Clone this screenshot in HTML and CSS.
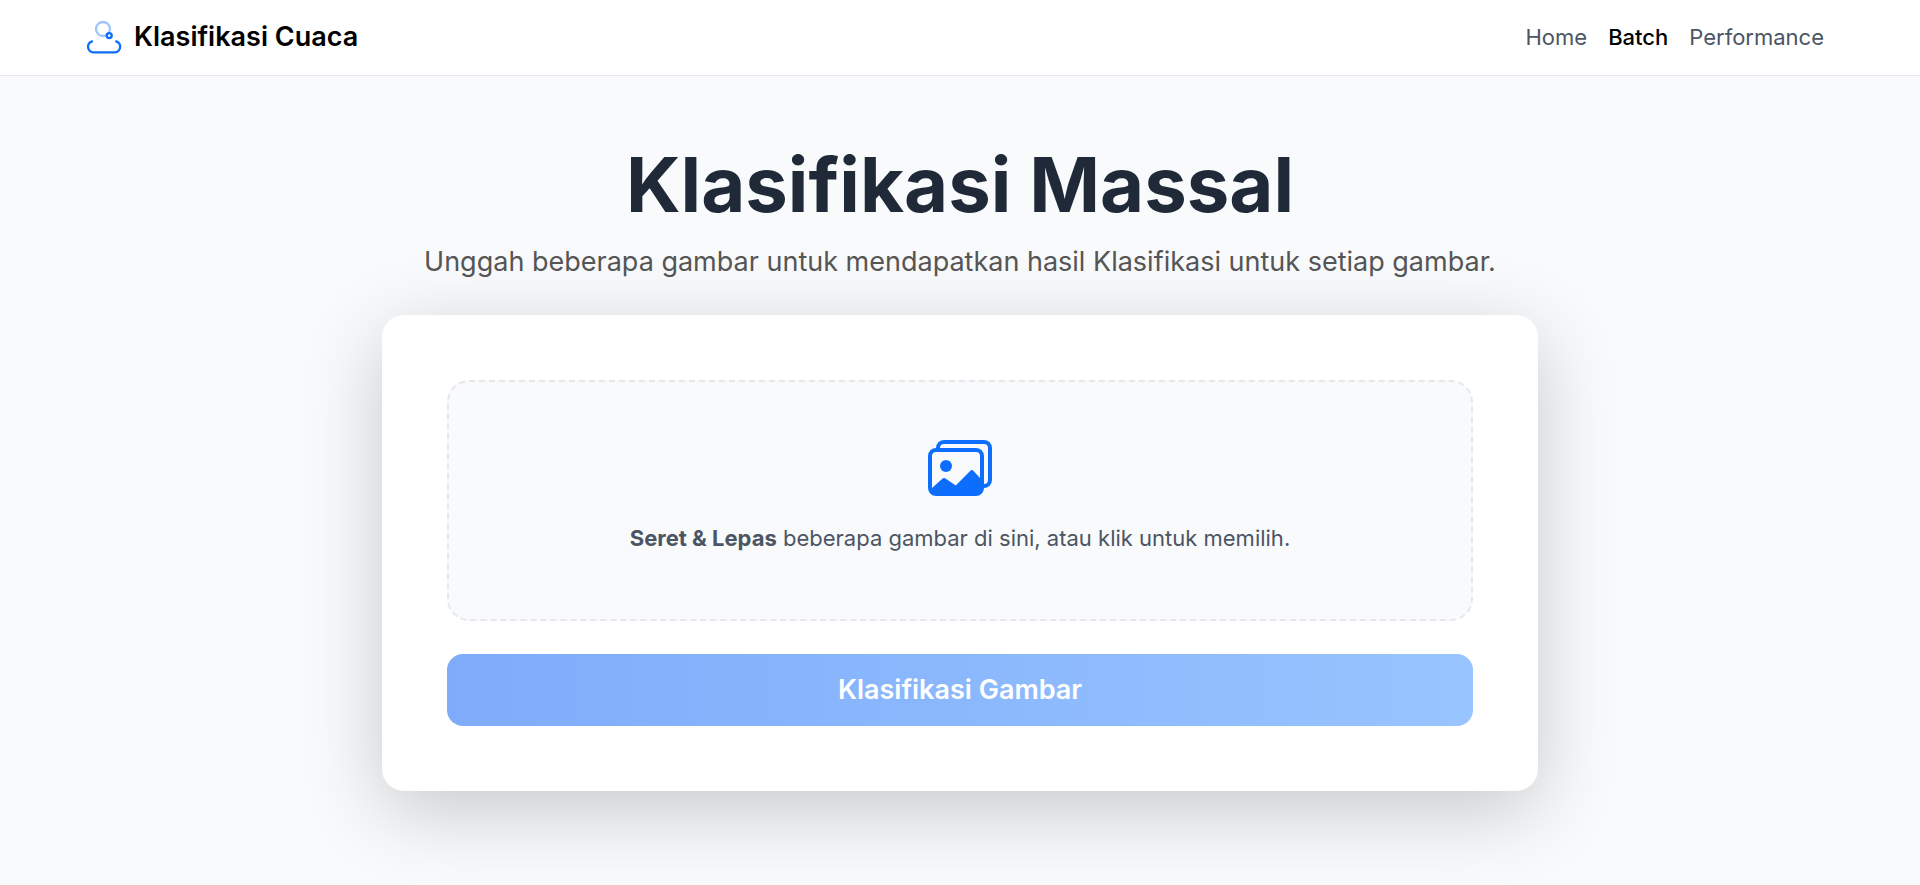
FILE: index.html
```html
<!DOCTYPE html>
<html lang="id">
<head>
<meta charset="utf-8">
<meta name="viewport" content="width=device-width, initial-scale=1">
<title>Klasifikasi Massal</title>
<link rel="stylesheet" href="styles.css">
</head>
<body>
<header class="navbar">
  <a class="brand" href="#">
    <svg class="brand-icon" viewBox="0 1 36 36" fill="none" stroke-width="2.3" stroke-linecap="round" aria-hidden="true">
      <circle cx="17" cy="11" r="7" stroke="#9ec5fe"/>
      <circle cx="23.2" cy="17.6" r="2.5" stroke="#0d6efd" stroke-width="2.4"/>
      <path d="M6 23.4a5.8 5.8 0 0 0-4 5.4a5.6 5.6 0 0 0 5.6 5.6h21a5.6 5.6 0 0 0 5.6-5.6a5.8 5.8 0 0 0-4-5.4" stroke="#0d6efd"/>
    </svg>
    <span>Klasifikasi Cuaca</span>
  </a>
  <nav class="nav-links">
    <a href="#">Home</a>
    <a class="active" href="#" aria-current="page">Batch</a>
    <a href="#">Performance</a>
  </nav>
</header>
<main class="page">
  <h1 class="title">Klasifikasi Massal</h1>
  <p class="subtitle">Unggah beberapa gambar untuk mendapatkan hasil Klasifikasi untuk setiap gambar.</p>
  <form class="card">
    <label class="dropzone">
      <input class="file-input" type="file" accept="image/*" multiple>
      <svg class="drop-icon" viewBox="0 0 16 16" fill="currentColor" aria-hidden="true">
        <path d="M4.502 9a1.5 1.5 0 1 0 0-3 1.5 1.5 0 0 0 0 3z"/>
        <path d="M14.002 13a2 2 0 0 1-2 2h-10a2 2 0 0 1-2-2V5A2 2 0 0 1 2 3a2 2 0 0 1 2-2h10a2 2 0 0 1 2 2v8a2 2 0 0 1-1.998 2zM14 2H4a1 1 0 0 0-1 1h9.002a2 2 0 0 1 2 2v7A1 1 0 0 0 15 11V3a1 1 0 0 0-1-1zM2.002 4a1 1 0 0 0-1 1v8l2.646-2.354a.5.5 0 0 1 .63-.062l2.66 1.773 3.71-3.71a.5.5 0 0 1 .577-.094l1.777 1.947V5a1 1 0 0 0-1-1h-10z"/>
      </svg>
      <span class="drop-text"><strong>Seret &amp; Lepas</strong> beberapa gambar di sini, atau klik untuk memilih.</span>
    </label>
    <button class="submit" type="submit" disabled>Klasifikasi Gambar</button>
  </form>
</main>
</body>
</html>
```
FILE: styles.css
```css
* {
  box-sizing: border-box;
}

body {
  margin: 0;
  min-height: 100vh;
  background: #f9fafc;
  color: #4b5563;
  font-family: Inter, "Liberation Sans", sans-serif;
}

.navbar {
  display: flex;
  align-items: center;
  justify-content: space-between;
  min-height: 76px;
  padding: 0 96px 2px 86px;
  background: #fff;
  border-bottom: 1px solid #e5e7eb;
}

.brand {
  display: flex;
  align-items: center;
  gap: 12px;
  color: #000;
  font-size: 27px;
  font-weight: 600;
  text-decoration: none;
}

.brand-icon {
  width: 36px;
  height: 36px;
}

.nav-links {
  display: flex;
  gap: 21px;
  font-size: 22px;
}

.nav-links a {
  color: #4b5563;
  text-decoration: none;
}

.nav-links .active {
  color: #000;
  font-weight: 500;
}

.page {
  max-width: 1156px;
  margin: 0 auto;
  padding: 62px 0 94px;
  text-align: center;
}

.title {
  margin: 0;
  color: #1f2937;
  font-size: 76px;
  font-weight: 700;
  line-height: 92px;
}

.subtitle {
  margin: 14px 0 35px;
  color: #555;
  font-size: 27px;
  line-height: 36px;
}

.card {
  display: flex;
  flex-direction: column;
  gap: 33px;
  padding: 65px;
  background: #fff;
  border-radius: 22px;
  box-shadow: 0 20px 80px rgba(0, 0, 0, 0.2);
}

.dropzone {
  display: flex;
  flex-direction: column;
  align-items: center;
  gap: 22px;
  padding: 54px 32px 65px;
  background: #f9fafc;
  border: 2px dashed #e5e7eb;
  border-radius: 22px;
  cursor: pointer;
}

.file-input {
  position: absolute;
  width: 1px;
  height: 1px;
  opacity: 0;
}

.drop-icon {
  width: 64px;
  height: 64px;
  color: #0d6efd;
}

.drop-text {
  font-size: 22px;
  line-height: 32px;
}

.submit {
  padding: 18px;
  border: 0;
  border-radius: 16px;
  background: linear-gradient(90deg, #7eacfa, #98c4ff);
  color: #fff;
  font: inherit;
  font-size: 27px;
  font-weight: 600;
  line-height: 36px;
}
```
